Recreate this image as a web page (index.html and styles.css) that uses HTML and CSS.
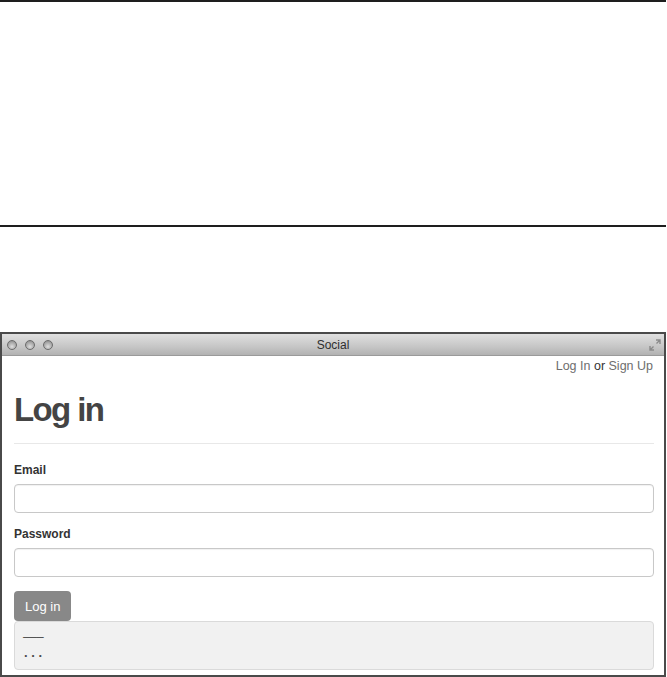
FILE: index.html
```html
<!DOCTYPE html>
<html lang="en">
<head>
    <meta charset="UTF-8">
    <meta name="viewport" content="width=device-width, initial-scale=1.0">
    <title>Social - Log in</title>
    <link rel="stylesheet" href="styles.css">
</head>
<body>
    <div class="rule"></div>
    <div class="blank"></div>
    <div class="rule"></div>
    <div class="gap"></div>

    <div class="window">
        <div class="titlebar">
            <div class="lights">
                <span class="light"></span>
                <span class="light"></span>
                <span class="light"></span>
            </div>
            <div class="title">Social</div>
            <div class="resize">
                <svg width="12" height="12" viewBox="0 0 12 12">
                    <path d="M7 1h4v4M11 1L7.5 4.5" fill="none" stroke="#8a8a8a" stroke-width="1.4"/>
                    <path d="M5 11H1V7M1 11l3.5-3.5" fill="none" stroke="#8a8a8a" stroke-width="1.4"/>
                </svg>
            </div>
        </div>

        <div class="content">
            <div class="nav">
                <a href="#" class="nav-link">Log In</a> or <a href="#" class="nav-link">Sign Up</a>
            </div>

            <h1>Log in</h1>
            <hr>

            <form class="login-form">
                <div class="field">
                    <label for="email">Email</label>
                    <input type="email" id="email">
                </div>
                <div class="field">
                    <label for="password">Password</label>
                    <input type="password" id="password">
                </div>
                <button type="button" class="btn">Log in</button>
            </form>

            <div class="well">
                <div class="well-line">&ndash;&ndash;&ndash;</div>
                <div class="well-line dots">. . .</div>
            </div>
        </div>
    </div>
</body>
</html>
```

FILE: styles.css
```css
body {
    font-family: "Liberation Sans", Arial, sans-serif;
    background: white;
    margin: 0;
    padding: 0;
}
.rule {
    height: 2px;
    background: #1e1e1e;
    margin-right: 1px;
}
.blank {
    height: 223px;
}
.gap {
    height: 105px;
}
.window {
    border: 2px solid #4a4a4a;
    margin-right: 1px;
    background: white;
}
.titlebar {
    height: 22px;
    display: grid;
    grid-template-columns: 1fr auto 1fr;
    align-items: center;
    background: linear-gradient(#e0e0e0, #c6c6c6 60%, #b2b2b2);
    border-bottom: 1px solid #9a9a9a;
    box-sizing: border-box;
}
.lights {
    display: flex;
    gap: 8px;
    padding-left: 5px;
}
.light {
    width: 10px;
    height: 10px;
    border-radius: 50%;
    box-sizing: border-box;
    border: 1px solid #6c6c6c;
    background: radial-gradient(circle at 50% 70%, #dedede, #9a9a9a 75%);
}
.title {
    font-size: 12px;
    color: #2e2e2e;
}
.resize {
    display: flex;
    justify-content: flex-end;
    padding-right: 3px;
}
.resize svg {
    display: block;
}
.content {
    padding: 0 10px 5px 12px;
}
.nav {
    text-align: right;
    font-size: 12.5px;
    line-height: 16px;
    color: #333;
    padding: 2px 1px 0 0;
}
.nav-link {
    color: #6e6e6e;
    text-decoration: none;
}
h1 {
    font-size: 33px;
    line-height: 40px;
    font-weight: bold;
    letter-spacing: -1.6px;
    color: #444;
    margin: 16px 0 0 0;
}
hr {
    border: none;
    border-top: 1px solid #e8e8e8;
    margin: 13px 0 0 0;
}
.login-form {
    margin-top: 18px;
    display: flex;
    flex-direction: column;
    align-items: flex-start;
}
.field {
    display: flex;
    flex-direction: column;
    width: 100%;
    margin-bottom: 13px;
}
.field label {
    font-size: 12px;
    line-height: 17px;
    font-weight: bold;
    color: #333;
    margin-bottom: 5px;
}
.field input {
    height: 29px;
    box-sizing: border-box;
    border: 1px solid #c8c8c8;
    border-radius: 4px;
    box-shadow: inset 0 1px 1px rgba(0,0,0,0.06);
    background: white;
    margin: 0;
}
.btn {
    margin-top: 1px;
    height: 30px;
    padding: 0 11px;
    background: #888;
    border: none;
    border-radius: 4px;
    color: white;
    font-family: "Liberation Sans", Arial, sans-serif;
    font-size: 13px;
}
.well {
    background: #f1f1f1;
    border: 1px solid #dadada;
    border-radius: 4px;
    padding: 7px 8px 8px 8px;
}
.well-line {
    font-size: 13px;
    line-height: 16px;
    color: #4a4a4a;
    letter-spacing: -0.5px;
}
.dots {
    font-weight: bold;
    letter-spacing: 0;
    padding-left: 1px;
}
```
